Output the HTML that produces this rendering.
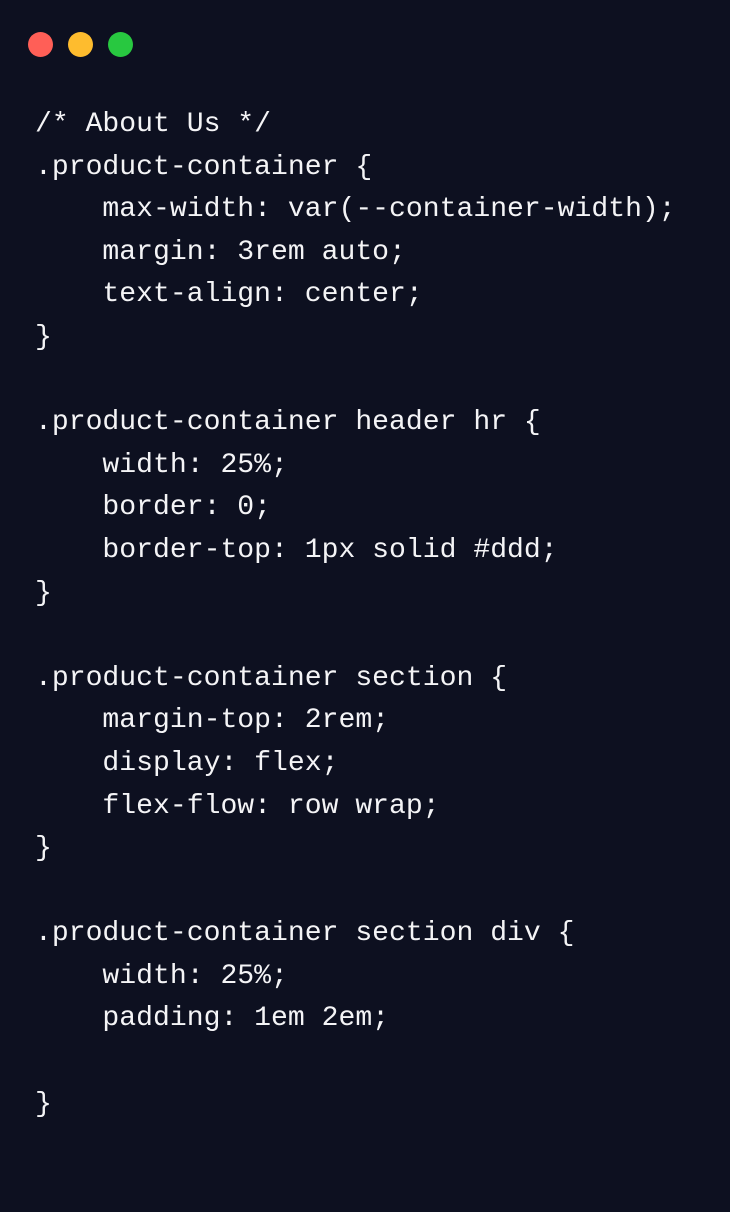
<!DOCTYPE html>
<html><head><meta charset="utf-8"><style>
html,body{margin:0;padding:0;background:#0d1020;width:730px;height:1212px;overflow:hidden}
.dot{position:absolute;top:32px;width:25px;height:25px;border-radius:50%}
pre{position:absolute;left:35px;top:104px;margin:0;font-family:"Liberation Mono","DejaVu Sans Mono",monospace;font-size:28.1px;line-height:42.6px;color:#f4f4f6}
</style></head><body>
<div class="dot" style="left:28px;background:#ff5f57"></div>
<div class="dot" style="left:68px;background:#febc2e"></div>
<div class="dot" style="left:108px;background:#28c840"></div>
<pre>/* About Us */
.product-container {
    max-width: var(--container-width);
    margin: 3rem auto;
    text-align: center;
}

.product-container header hr {
    width: 25%;
    border: 0;
    border-top: 1px solid #ddd;
}

.product-container section {
    margin-top: 2rem;
    display: flex;
    flex-flow: row wrap;
}

.product-container section div {
    width: 25%;
    padding: 1em 2em;

}</pre>
</body></html>
